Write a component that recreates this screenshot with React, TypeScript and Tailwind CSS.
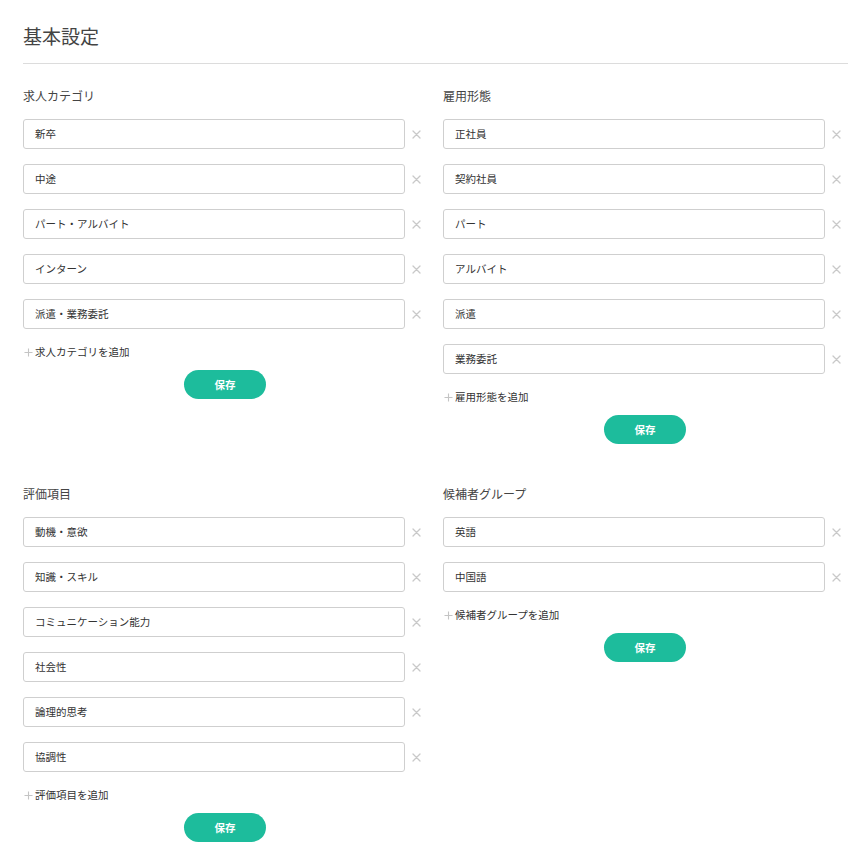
import React from "react";

type Section = { title: string; items: string[]; add: string };

const sections: Section[] = [
  { title: "求人カテゴリ", items: ["新卒", "中途", "パート・アルバイト", "インターン", "派遣・業務委託"], add: "求人カテゴリを追加" },
  { title: "雇用形態", items: ["正社員", "契約社員", "パート", "アルバイト", "派遣", "業務委託"], add: "雇用形態を追加" },
  { title: "評価項目", items: ["動機・意欲", "知識・スキル", "コミュニケーション能力", "社会性", "論理的思考", "協調性"], add: "評価項目を追加" },
  { title: "候補者グループ", items: ["英語", "中国語"], add: "候補者グループを追加" },
];

function CloseIcon() {
  return (
    <svg width="9" height="9" viewBox="0 0 9 9" className="block">
      <path d="M1 1 L8 8 M8 1 L1 8" stroke="#c9c9c9" strokeWidth="1.3" strokeLinecap="round" />
    </svg>
  );
}

function PlusIcon() {
  return (
    <svg width="9" height="9" viewBox="0 0 9 9" className="block">
      <path d="M4.5 0.5 V8.5 M0.5 4.5 H8.5" stroke="#c4c4c4" strokeWidth="1.1" />
    </svg>
  );
}

function Block({ s }: { s: Section }) {
  return (
    <div className="w-[420px]">
      <h2 className="text-[12px] leading-[20px] text-[#444] mb-[13px]">{s.title}</h2>
      <div className="flex flex-col gap-[15px]">
        {s.items.map((it) => (
          <div key={it} className="flex items-center">
            <div className="w-[382px] h-[30px] border border-[#cfcfcf] rounded-[3px] flex items-center pl-[11px] text-[10.5px] text-[#333] bg-white">
              {it}
            </div>
            <div className="ml-[7px]">
              <CloseIcon />
            </div>
          </div>
        ))}
      </div>
      <div className="mt-[15px] h-[16px] flex items-center text-[10.5px] text-[#333]">
        <span className="ml-[1px] mr-[2px]">
          <PlusIcon />
        </span>
        {s.add}
      </div>
      <div className="mt-[10px] ml-[161px] w-[82px] h-[29px] rounded-full bg-[#1dbc9c] text-white text-[10.5px] font-bold flex items-center justify-center">
        保存
      </div>
    </div>
  );
}

export default function App() {
  return (
    <div
      className="bg-white min-h-[855px] pl-[23px] pt-[24px]"
      style={{ fontFamily: '"Noto Sans CJK JP", "Noto Sans", sans-serif' }}
    >
      <h1 className="text-[19px] leading-[24px] text-[#444]">基本設定</h1>
      <div className="mt-[15px] w-[825px] h-px bg-[#dcdcdc]" />
      <div className="mt-[22px] grid grid-cols-[420px_420px] gap-y-[40px]">
        {sections.map((s) => (
          <Block key={s.title} s={s} />
        ))}
      </div>
    </div>
  );
}
